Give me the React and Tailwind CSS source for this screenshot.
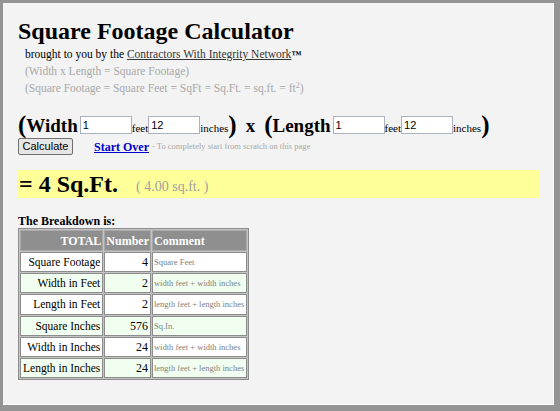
const rows = [
  { label: "Square Footage", value: "4", note: "Square Feet", tint: false },
  { label: "Width in Feet", value: "2", note: "width feet + width inches", tint: true },
  { label: "Length in Feet", value: "2", note: "length feet + length inches", tint: false },
  { label: "Square Inches", value: "576", note: "Sq.In.", tint: true },
  { label: "Width in Inches", value: "24", note: "width feet + width inches", tint: false },
  { label: "Length in Inches", value: "24", note: "length feet + length inches", tint: true },
];

const serif = "font-['Liberation_Serif','Times_New_Roman',serif]";

function SizeInput({ value }) {
  return (
    <input
      className="h-[18px] w-[52px] border border-[#a9b3bd] bg-white px-[2px] font-['Liberation_Sans',Arial,sans-serif] text-[11px] text-black outline-none"
      type="text"
      defaultValue={value}
    />
  );
}

function Dimension({ label }) {
  return (
    <span className="flex items-end">
      <span className="text-[25px] leading-[24px] font-bold">(</span>
      <span className="mr-[2px] text-[19px] leading-[22px] font-bold">{label}</span>
      <span className="mb-[1px]">
        <SizeInput value="1" />
      </span>
      <span className="mb-[2px] text-[11px] leading-[14px]">feet</span>
      <span className="mb-[1px]">
        <SizeInput value="12" />
      </span>
      <span className="mb-[2px] text-[11px] leading-[14px]">inches</span>
      <span className="text-[25px] leading-[24px] font-bold">)</span>
    </span>
  );
}

export default function App() {
  return (
    <div className={`h-[411px] w-[560px] bg-[#949494] pt-[3px] pr-[6px] pb-[6px] pl-[3px] ${serif}`}>
      <div className="h-full border-r border-b border-white bg-[#f3f3f3] pt-[14px] pr-[12px] pl-[15px] text-black">
        <h1 className="h-[29px] text-[24px] leading-[28px] font-bold">Square Footage Calculator</h1>
        <div className="pl-[7px] text-[11.5px] leading-[17px]">
          <p>
            brought to you by the{" "}
            <span className="text-[#333] underline">Contractors With Integrity Network</span>
            <span className="text-[10px] font-bold">™</span>
          </p>
          <p className="text-[#a8a8a8]">(Width x Length = Square Footage)</p>
          <p className="text-[#a8a8a8]">
            (Square Footage = Square Feet = SqFt = Sq.Ft. = sq.ft. = ft<sup className="text-[8px]">2</sup>)
          </p>
        </div>

        <div className="mt-[16px] flex h-[24px] items-end">
          <Dimension label="Width" />
          <span className="mx-[9px] text-[19px] leading-[22px] font-bold">x</span>
          <Dimension label="Length" />
        </div>

        <div className="mt-[1px] flex h-[17px] items-center">
          <button
            className="h-[17px] w-[55px] rounded-[2px] border border-[#707070] bg-[#e6e6e6] font-['Liberation_Sans',Arial,sans-serif] text-[11px] leading-none"
            type="button"
          >
            Calculate
          </button>
          <span className="ml-[21px] text-[12px] font-bold text-[#0000cc] underline">Start Over</span>
          <span className="ml-[3px] text-[8.5px] text-[#a8a8a8]">- To completely start from scratch on this page</span>
        </div>

        <div className="mt-[15px] mr-[1px] flex h-[28px] items-center bg-[#ffff99] pl-[1px]">
          <span className="text-[24px] leading-[28px] font-bold">= 4 Sq.Ft.</span>
          <span className="ml-[18px] mt-[4px] text-[14px] text-[#a0a0a0]">( 4.00 sq.ft. )</span>
        </div>

        <p className="mt-[17px] text-[12px] leading-[13px] font-bold">The Breakdown is:</p>

        <table className="border-separate border-spacing-[1px] border border-[#8c8c8c] bg-[#c4c4c4]">
          <thead>
            <tr className="bg-[#8f8f8f] text-[12px] leading-[14px] font-bold text-white">
              <th className="h-[21px] w-[76px] border border-[#a8a8a8] px-[1px] text-right">TOTAL</th>
              <th className="w-[42px] border border-[#a8a8a8] px-[1px] text-left">Number</th>
              <th className="w-[95px] border border-[#a8a8a8] px-[1px] text-left">Comment</th>
            </tr>
          </thead>
          <tbody>
            {rows.map((row) => (
              <tr className={row.tint ? "bg-[#f0fff0]" : "bg-white"} key={row.label}>
                <td className="h-[20.2px] border border-[#8c8c8c] px-[2px] text-right text-[11.5px] leading-[14px] whitespace-nowrap">
                  {row.label}
                </td>
                <td className="border border-[#8c8c8c] px-[2px] text-right text-[12px] leading-[14px]">{row.value}</td>
                <td className="border border-[#8c8c8c] px-[1px] text-[8.5px] leading-[12px] whitespace-nowrap text-[#808080]">
                  {row.note}
                </td>
              </tr>
            ))}
          </tbody>
        </table>
      </div>
    </div>
  );
}
